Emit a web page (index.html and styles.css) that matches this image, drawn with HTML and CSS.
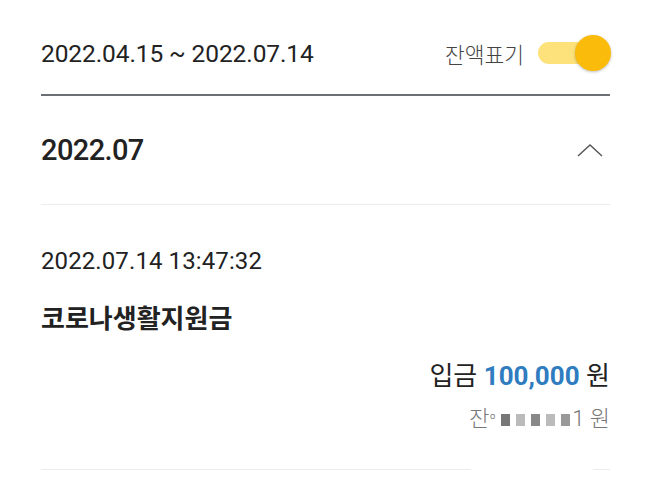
FILE: index.html
```html
<!DOCTYPE html>
<html lang="ko">
<head>
    <meta charset="UTF-8">
    <title>거래내역</title>
    <link rel="stylesheet" href="styles.css">
</head>
<body>
<div class="page">
    <div class="header">
        <span class="period">2022.04.15 ~ 2022.07.14</span>
        <div class="balanceToggle">
            <span class="toggleLabel">잔액표기</span>
            <span class="switch"><span class="knob"></span></span>
        </div>
    </div>
    <div class="month">
        <span class="monthTitle">2022.07</span>
        <svg class="chevron" width="26" height="14" viewBox="0 0 26 14">
            <polyline points="1,13 13,2 25,13" fill="none" stroke="#555" stroke-width="1.4"/>
        </svg>
    </div>
    <div class="item">
        <div class="time">2022.07.14 13:47:32</div>
        <div class="title">코로나생활지원금</div>
        <div class="amount">입금 <b>100,000</b> 원</div>
        <div class="balance">잔<span class="partial">º</span> <span class="mosaic"><i class="m1"></i><i class="m2"></i><i class="m3"></i><i class="m2"></i><i class="m4"></i></span>1 원</div>
        <div class="cover"></div>
    </div>
</div>
</body>
</html>
```

FILE: styles.css
```css
body{margin:0;background:#fff;font-family:Roboto,"Noto Sans CJK KR",sans-serif;color:#222;}
.page{padding:0 40px 0 41px;}
.header{display:flex;align-items:center;justify-content:space-between;height:96px;padding-top:12px;box-sizing:border-box;border-bottom:2px solid #6c6f76;}
.period{font-size:24.5px;color:#222;letter-spacing:-0.1px;}
.balanceToggle{display:flex;align-items:center;gap:14px;}
.toggleLabel{font-size:21.5px;font-weight:300;color:#444;}
.switch{position:relative;width:56px;height:22px;border-radius:11px;background:#fde27c;margin-right:16px;}
.knob{position:absolute;right:-17px;top:-7px;width:36px;height:36px;border-radius:50%;background:#fbbb0a;box-shadow:0 1px 3px rgba(0,0,0,0.25);}
.month{display:flex;align-items:center;justify-content:space-between;height:108px;border-bottom:1px solid #ececec;}
.monthTitle{font-size:29px;font-weight:500;color:#222;letter-spacing:-0.6px;}
.chevron{margin-right:7px;}
.item{position:relative;padding:41px 0 36px;border-bottom:1px solid #ececec;}
.time{font-size:24px;line-height:30px;color:#222;letter-spacing:0.1px;}
.title{margin-top:27px;font-size:26px;line-height:32px;font-weight:700;color:#222;}
.amount{margin-top:24px;text-align:right;font-size:26px;line-height:34px;color:#222;}
.amount b{color:#2f7cc0;font-weight:700;font-family:Roboto,sans-serif;}
.balance{margin-top:12px;text-align:right;font-size:22px;line-height:28px;font-weight:300;color:#777;}
.partial{font-size:14px;vertical-align:top;}
.mosaic{display:inline-flex;gap:6px;vertical-align:middle;margin-right:2px;}
.mosaic i{display:block;width:9px;height:12px;}
.m1{background:#777;}
.m2{background:#bbb;}
.m3{background:#888;}
.m4{background:#999;}
.cover{position:absolute;left:430px;bottom:-2px;width:122px;height:6px;background:#fff;}
```
